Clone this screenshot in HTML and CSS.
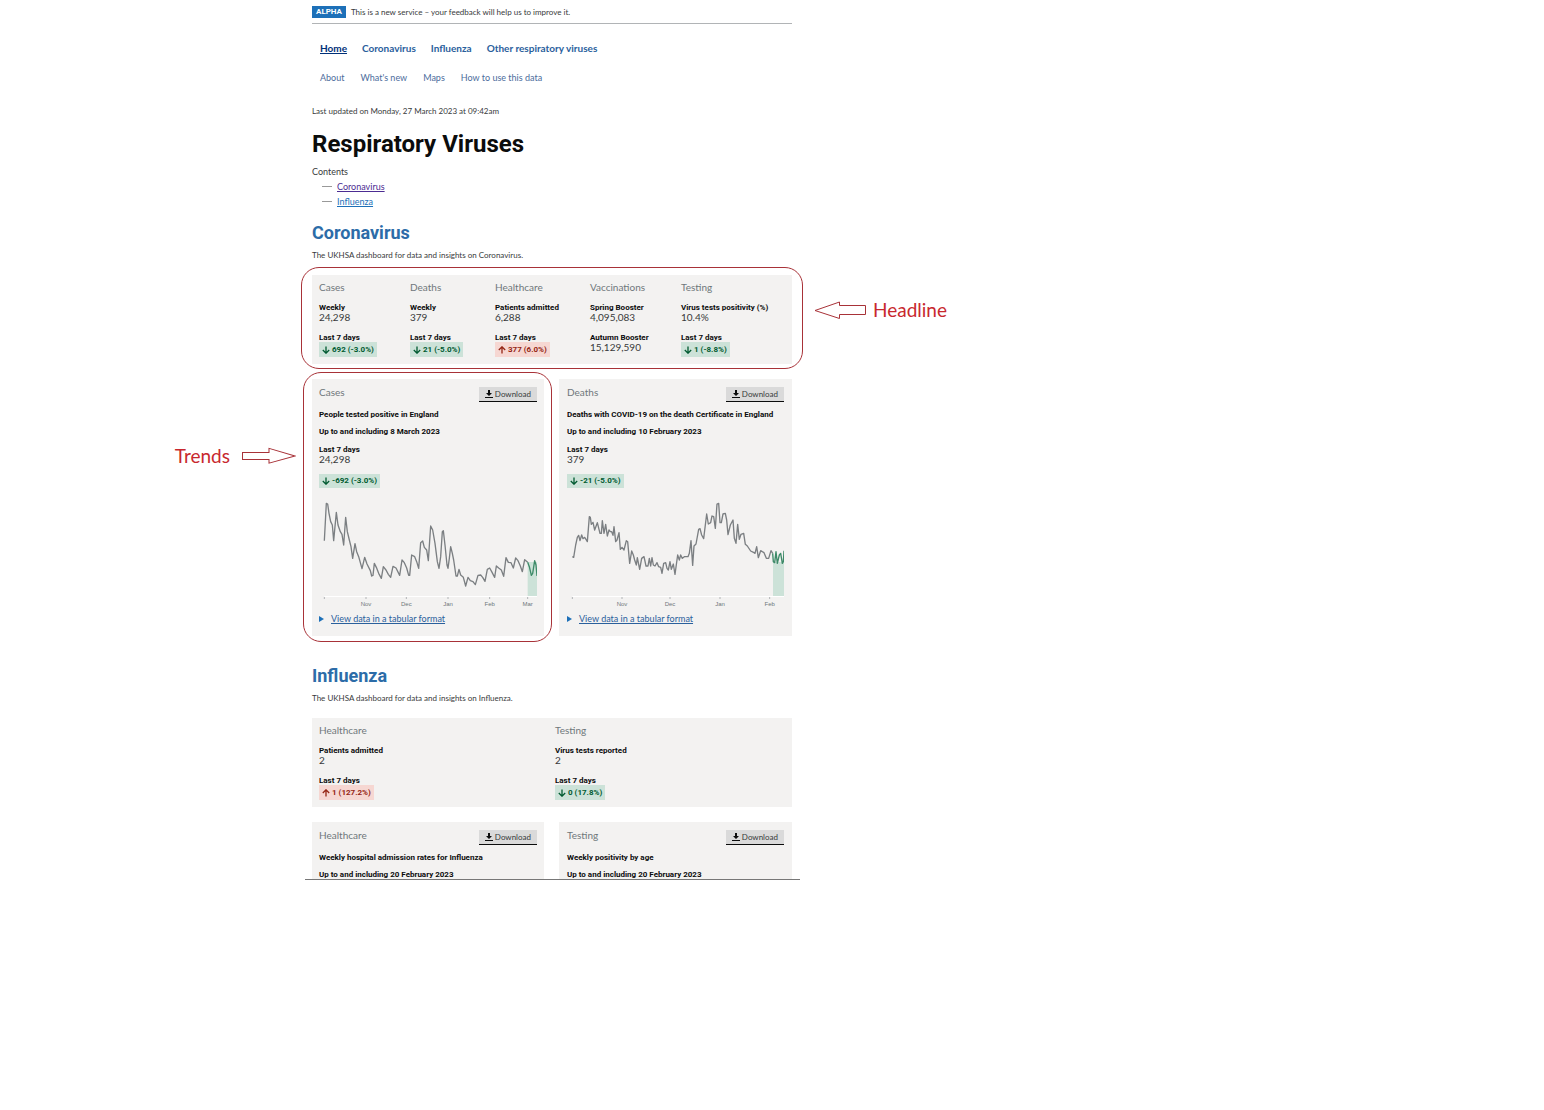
FILE: index.html
```html
<!DOCTYPE html>
<html lang="en">
<head>
<meta charset="utf-8">
<title>Respiratory Viruses</title>
<link rel="stylesheet" href="styles.css">
</head>
<body>
<svg class="defs" aria-hidden="true">
  <symbol id="down" viewBox="0 0 8 8"><path d="M4 0.5V7M0.8 4L4 7.2L7.2 4" fill="none" stroke="currentColor" stroke-width="1.3"/></symbol>
  <symbol id="up" viewBox="0 0 8 8"><path d="M4 7.5V1M0.8 4L4 0.8L7.2 4" fill="none" stroke="currentColor" stroke-width="1.3"/></symbol>
  <symbol id="download" viewBox="0 0 8 8"><path d="M3 0H5V3H7L4 6L1 3H3ZM0 7H8V8H0Z" fill="currentColor"/></symbol>
</svg>
<div class="board">
<div class="page">
  <header>
    <div class="phase"><strong class="phase-tag">ALPHA</strong><span>This is a new service – your feedback will help us to improve it.</span></div>
    <nav class="nav nav-main" aria-label="Topics">
      <a href="#" class="current">Home</a><a href="#coronavirus">Coronavirus</a><a href="#influenza">Influenza</a><a href="#">Other respiratory viruses</a>
    </nav>
    <nav class="nav" aria-label="Site">
      <a href="#">About</a><a href="#">What's new</a><a href="#">Maps</a><a href="#">How to use this data</a>
    </nav>
  </header>
  <main>
    <p class="small updated">Last updated on Monday, 27 March 2023 at 09:42am</p>
    <h1>Respiratory Viruses</h1>
    <p class="contents-title">Contents</p>
    <ul class="contents">
      <li><a href="#coronavirus" class="visited">Coronavirus</a></li>
      <li><a href="#influenza">Influenza</a></li>
    </ul>

    <section id="coronavirus">
      <h2>Coronavirus</h2>
      <p class="small intro">The UKHSA dashboard for data and insights on Coronavirus.</p>
      <div class="headline five">
        <div><h3>Cases</h3><p class="label">Weekly</p><p class="value">24,298</p><p class="label next">Last 7 days</p><span class="tag good"><svg><use href="#down"/></svg>692 (-3.0%)</span></div>
        <div><h3>Deaths</h3><p class="label">Weekly</p><p class="value">379</p><p class="label next">Last 7 days</p><span class="tag good"><svg><use href="#down"/></svg>21 (-5.0%)</span></div>
        <div><h3>Healthcare</h3><p class="label">Patients admitted</p><p class="value">6,288</p><p class="label next">Last 7 days</p><span class="tag bad"><svg><use href="#up"/></svg>377 (6.0%)</span></div>
        <div><h3>Vaccinations</h3><p class="label">Spring Booster</p><p class="value">4,095,083</p><p class="label next">Autumn Booster</p><p class="value">15,129,590</p></div>
        <div><h3>Testing</h3><p class="label">Virus tests positivity (%)</p><p class="value">10.4%</p><p class="label next">Last 7 days</p><span class="tag good"><svg><use href="#down"/></svg>1 (-8.8%)</span></div>
        <div class="note note-headline">
          <div class="callout"><svg viewBox="0 0 52 18"><path d="M1 9.5L25.500 1V4.500H51.500V13.500H25.500V17.500Z"/></svg><span>Headline</span></div>
        </div>
      </div>
      <div class="cards">
        <article class="card">
          <div class="card-head"><h3>Cases</h3><button type="button"><svg><use href="#download"/></svg>Download</button></div>
          <p class="label">People tested positive in England</p>
          <p class="label date">Up to and including 8 March 2023</p>
          <p class="label week">Last 7 days</p><p class="value">24,298</p>
          <span class="tag good"><svg><use href="#down"/></svg>-692 (-3.0%)</span>
          <svg class="chart" viewBox="21 30 654 324" role="img" aria-label="Cases by day">
            <rect x="647" y="216" width="28" height="102" fill="#cce2d8"/>
            <path class="axis" d="M37 319.500H675"/>
            <path class="tick" d="M37 321V327M162 321V327M283 321V327M408 321V327M533 321V327M647 321V327"/>
            <path class="line" d="M37 152L43 40L47 42L51 70L56 95L61 105L65 152L73 67L78 105L85 125L90 133L95 165L101 82L106 125L112 150L117 170L122 205L129 161L134 185L140 200L150 236L158 202L165 222L175 242L179 258L183 256L187 220L193 232L200 250L208 265L214 230L222 240L229 253L236 262L243 229L252 234L263 256L270 210L277 218L284 234L290 256L293 256L299 195L308 200L314 215L320 235L326 158L332 153L337 172L344 180L349 212L356 108L362 120L369 160L376 215L381 235L386 200L391 125L394 122L399 165L405 225L408 235L412 205L416 170L421 190L425 210L432 258L436 258L441 238L446 255L454 262L461 288L468 262L475 272L483 275L490 284L498 256L506 255L512 262L519 274L526 238L533 234L539 245L548 262L553 228L560 234L568 240L575 259L582 203L589 217L597 218L604 234L611 204L618 212L625 228L631 245L638 209L647 217"/>
            <path class="line recent" d="M647 217L652 230L658 256L662 250L668 212L672 225L675 258"/>
            <g class="months"><text x="162" y="348">Nov</text><text x="283" y="348">Dec</text><text x="408" y="348">Jan</text><text x="533" y="348">Feb</text><text x="647" y="348">Mar</text></g>
          </svg>
          <details><summary><span>View data in a tabular format</span></summary></details>
          <div class="note note-trends">
            <div class="callout"><span>Trends</span><svg viewBox="0 0 53 16"><path d="M0.500 4.500H26.500V0.500L52 8L26.500 15V11.500H0.500Z"/></svg></div>
          </div>
        </article>
        <article class="card">
          <div class="card-head"><h3>Deaths</h3><button type="button"><svg><use href="#download"/></svg>Download</button></div>
          <p class="label">Deaths with COVID-19 on the death Certificate in England</p>
          <p class="label date">Up to and including 10 February 2023</p>
          <p class="label week">Last 7 days</p><p class="value">379</p>
          <span class="tag good"><svg><use href="#down"/></svg>-21 (-5.0%)</span>
          <svg class="chart" viewBox="21 30 651 324" role="img" aria-label="Deaths by day">
            <rect x="639" y="216" width="34" height="102" fill="#cce2d8"/>
            <path class="axis" d="M37 319.500H673"/>
            <path class="tick" d="M37 321V327M186 321V327M330 321V327M480 321V327M629 321V327"/>
            <path class="line" d="M37 200L41 202L47 165L52 142L56 136L60 152L65 135L69 146L74 142L78 148L82 155L88 80L91 82L94 103L99 97L104 120L112 98L120 130L124 130L127 92L132 130L137 103L142 138L147 120L151 125L155 125L159 136L162 110L167 155L171 150L177 128L181 178L186 172L192 180L199 152L203 155L209 220L215 183L220 195L224 210L229 225L232 203L239 238L245 205L252 200L258 228L264 228L268 205L272 228L276 203L280 225L285 228L291 218L296 230L302 232L306 250L311 220L317 218L321 235L325 240L330 215L334 238L340 222L345 253L353 195L358 210L362 195L367 205L373 200L384 200L388 190L393 152L398 226L402 168L408 162L416 118L420 116L425 135L431 146L440 72L445 102L452 98L456 78L461 80L466 115L471 42L476 40L480 98L484 98L489 72L496 70L500 90L504 134L511 105L519 90L523 145L528 160L533 103L538 148L543 133L551 130L556 163L562 168L572 183L582 188L585 190L590 170L595 203L602 182L612 188L619 205L626 205L633 182L638 190"/>
            <path class="line recent" d="M638 190L640 215L644 218L648 185L652 220L658 195L662 190L667 220L670 215L672 182"/>
            <g class="months"><text x="186" y="348">Nov</text><text x="330" y="348">Dec</text><text x="480" y="348">Jan</text><text x="629" y="348">Feb</text></g>
          </svg>
          <details><summary><span>View data in a tabular format</span></summary></details>
        </article>
      </div>
    </section>

    <section id="influenza">
      <h2>Influenza</h2>
      <p class="small intro">The UKHSA dashboard for data and insights on Influenza.</p>
      <div class="headline two">
        <div><h3>Healthcare</h3><p class="label">Patients admitted</p><p class="value">2</p><p class="label next">Last 7 days</p><span class="tag bad"><svg><use href="#up"/></svg>1 (127.2%)</span></div>
        <div><h3>Testing</h3><p class="label">Virus tests reported</p><p class="value">2</p><p class="label next">Last 7 days</p><span class="tag good"><svg><use href="#down"/></svg>0 (17.8%)</span></div>
      </div>
      <div class="cards cut">
        <article class="card">
          <div class="card-head"><h3>Healthcare</h3><button type="button"><svg><use href="#download"/></svg>Download</button></div>
          <p class="label">Weekly hospital admission rates for Influenza</p>
          <p class="label date">Up to and including 20 February 2023</p>
        </article>
        <article class="card">
          <div class="card-head"><h3>Testing</h3><button type="button"><svg><use href="#download"/></svg>Download</button></div>
          <p class="label">Weekly positivity by age</p>
          <p class="label date">Up to and including 20 February 2023</p>
        </article>
      </div>
    </section>
  </main>
</div>
</div>
</body>
</html>
```
FILE: styles.css
```css
* { box-sizing: border-box; }
body {
  margin: 0;
  background: #fff;
  color: #0b0c0c;
  font: 9px/15px Lato, Roboto, sans-serif;
}
h1, h2, h3, p, ul { margin: 0; padding: 0; }
h1, h2, .label, .tag, .phase-tag { font-family: Roboto, "Liberation Sans", sans-serif; }
a { color: #1d70b8; }
.defs { position: absolute; width: 0; height: 0; }

.board { display: grid; grid-template-columns: 305fr 495fr 744fr; }
.page {
  grid-column: 2;
  padding: 6px 8px 0 7px;
  border-bottom: 1px solid #777;
}

.phase {
  display: flex;
  align-items: center;
  gap: 5px;
  padding-bottom: 5px;
  border-bottom: 1px solid #b1b4b6;
  font-size: 8px;
  line-height: 12px;
  color: #383a3b;
}
.phase-tag {
  padding: 0 4px;
  background: #1d70b8;
  color: #fff;
}
.nav { display: flex; gap: 16px; padding: 0 8px; margin-top: 14px; }
.nav a { text-decoration: none; color: #4c6c9c; }
.nav-main { gap: 15px; margin-top: 17px; font-size: 10px; font-weight: 700; }
.nav-main a { color: #2a609c; }
.nav-main .current { color: #003078; text-decoration: underline; }

.small { font-size: 8px; line-height: 12px; color: #383a3b; }
.updated { margin-top: 20px; }
h1 { margin-top: 12px; font-size: 24px; line-height: 30px; }
.contents-title { margin-top: 5px; color: #383a3b; }
.contents { list-style: none; }
.contents li { display: flex; align-items: center; gap: 5px; padding-left: 10px; }
.contents li::before { content: ""; width: 10px; border-top: 1px solid #999; }
.contents .visited { color: #4c2c92; }

h2 { margin-top: 13px; font-size: 18px; line-height: 22px; color: #2c6ca8; }
.intro { margin-top: 5px; }
#influenza h2 { margin-top: 29px; }

h3 { font-size: 10px; line-height: 15px; font-weight: 400; color: #6f777b; }
.label { margin-bottom: -2px; font-size: 8px; line-height: 12px; font-weight: 700; }
.value { font-size: 10px; line-height: 11px; color: #383a3b; }

.headline {
  position: relative;
  display: grid;
  margin-top: 14px;
  padding: 5px 7px 7px;
  background: #f3f2f1;
}
.five { grid-template-columns: 91fr 85fr 95fr 91fr 104fr; }
.two { grid-template-columns: 236fr 230fr; }
.headline h3 { margin-bottom: 7px; }
.headline .next { margin-top: 9px; }

.tag {
  display: flex;
  align-items: center;
  gap: 2px;
  width: fit-content;
  padding: 0 3px;
  font-size: 8px;
  line-height: 15px;
  font-weight: 700;
}
.tag svg { width: 8px; height: 8px; }
.good { background: #cce2d8; color: #005a30; }
.bad { background: #f6d7d2; color: #942514; }

.cards {
  display: grid;
  grid-template-columns: 232fr 233fr;
  gap: 15px;
  margin-top: 15px;
}
.card { position: relative; padding: 8px 7px 10px; background: #f3f2f1; }
.card + .card { padding-left: 8px; padding-right: 8px; }
.card-head {
  display: flex;
  justify-content: space-between;
  align-items: flex-start;
  margin-bottom: 7px;
}
.card-head h3 { line-height: 11px; }
button {
  display: flex;
  align-items: center;
  gap: 2px;
  height: 15px;
  padding: 0 6px;
  border: 0;
  border-bottom: 1px solid #0b0c0c;
  background: #dadada;
  color: #383a3b;
  font: 8px/14px Lato, Roboto, sans-serif;
}
button svg { width: 8px; height: 8px; color: #0b0c0c; }
.card .date { margin-top: 7px; }
.card .week { margin-top: 8px; }
.card .tag { margin-top: 9px; line-height: 14px; }
.cut { overflow: hidden; }
.cut .card { padding-bottom: 0; }

.chart { display: block; width: 100%; margin: 12px 0 3px; }
.line { fill: none; stroke: #7b7f82; stroke-width: 4; stroke-linejoin: round; }
.recent { stroke: #3d8a68; }
.axis { stroke: #fff; stroke-width: 3; }
.tick { stroke: #b1b4b6; stroke-width: 3; }
.months { font-size: 18px; fill: #6f777b; text-anchor: middle; font-family: "Liberation Sans", sans-serif; }

summary { display: flex; align-items: center; gap: 7px; color: #2a609c; list-style: none; }
summary::before {
  content: "";
  border: solid transparent;
  border-width: 3px 0 3px 5px;
  border-left-color: #1d70b8;
}
summary span { text-decoration: underline; }

.note { position: absolute; border: 1px solid #a83238; border-radius: 18px; pointer-events: none; }
.note-headline { inset: -8px -11px -5px; }
.note-trends { inset: -7px -8px -6px -9px; }
.callout {
  position: absolute;
  display: flex;
  align-items: center;
  gap: 7px;
  color: #c8282e;
  font: 19px/24px Lato, sans-serif;
}
.callout svg { width: 52px; height: 18px; fill: none; stroke: #a83238; }
.note-headline .callout { left: 100%; top: 30px; margin-left: 12px; }
.note-trends .callout { right: 100%; top: 71px; margin-right: 8px; gap: 12px; }
.note-trends .callout svg { width: 54px; }
```
